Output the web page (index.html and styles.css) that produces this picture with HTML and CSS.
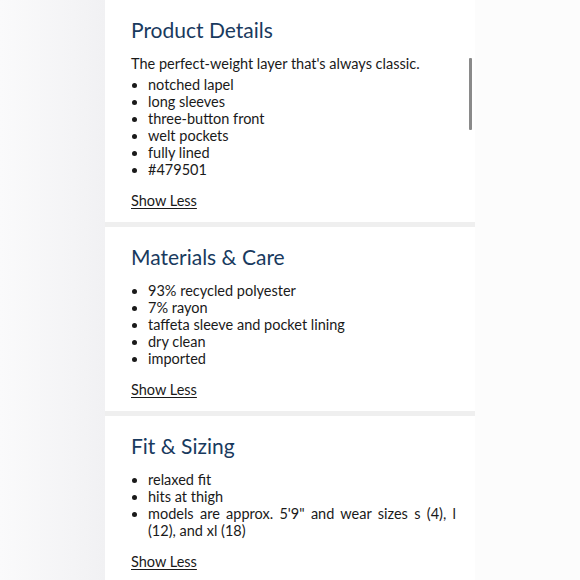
FILE: index.html
```html
<!DOCTYPE html>
<html>
<head>
<meta charset="utf-8">
<link rel="stylesheet" href="styles.css">
</head>
<body>
<div class="page">
  <div class="gutter-left"></div>
  <main class="panel">
    <div class="scrollbar"></div>
    <section class="section">
      <h2 class="title">Product Details</h2>
      <p class="intro">The perfect-weight layer that's always classic.</p>
      <ul class="list">
        <li>notched lapel</li>
        <li>long sleeves</li>
        <li>three-button front</li>
        <li>welt pockets</li>
        <li>fully lined</li>
        <li>#479501</li>
      </ul>
      <a class="toggle">Show Less</a>
    </section>
    <section class="section">
      <h2 class="title">Materials &amp; Care</h2>
      <ul class="list">
        <li>93% recycled polyester</li>
        <li>7% rayon</li>
        <li>taffeta sleeve and pocket lining</li>
        <li>dry clean</li>
        <li>imported</li>
      </ul>
      <a class="toggle">Show Less</a>
    </section>
    <section class="section">
      <h2 class="title">Fit &amp; Sizing</h2>
      <ul class="list">
        <li>relaxed fit</li>
        <li>hits at thigh</li>
        <li>models are approx. 5'9" and wear sizes s (4), l (12), and xl (18)</li>
      </ul>
      <a class="toggle">Show Less</a>
    </section>
  </main>
  <div class="gutter-right"></div>
</div>
</body>
</html>
```
FILE: styles.css
```css
html, body {
  margin: 0;
  padding: 0;
  height: 580px;
  overflow: hidden;
}
body {
  font-family: "Lato", "Noto Sans", sans-serif;
  color: #1a1a1a;
}
.page {
  display: flex;
  height: 580px;
}
.gutter-left {
  width: 105px;
  flex: none;
  background: linear-gradient(90deg, #fafafb 0%, #f4f4f6 70%, #f1f1f3 100%);
}
.gutter-right {
  flex: 1;
  background: #fcfcfc;
}
.panel {
  width: 370px;
  flex: none;
  position: relative;
  display: flex;
  flex-direction: column;
  gap: 5px;
  background: #efefef;
}
.scrollbar {
  position: absolute;
  left: 364px;
  top: 58px;
  width: 3px;
  height: 72px;
  background: #8a8a8a;
  border-radius: 1px;
}
.section {
  background: #fff;
  padding: 18px 19px 13px 26px;
}
.title {
  margin: 0 0 13px;
  font-size: 21px;
  line-height: 24px;
  font-weight: 400;
  color: #193a5e;
}
.intro {
  margin: 0 0 4px;
  font-size: 14.5px;
  line-height: 17px;
}
.list {
  margin: 0 0 12px;
  padding-left: 17px;
  font-size: 14.5px;
  line-height: 17px;
  text-align: justify;
}
.toggle {
  display: inline-block;
  font-size: 14.5px;
  line-height: 17px;
  color: #1a1a1a;
  text-decoration: underline;
  text-underline-offset: 2px;
}
```
